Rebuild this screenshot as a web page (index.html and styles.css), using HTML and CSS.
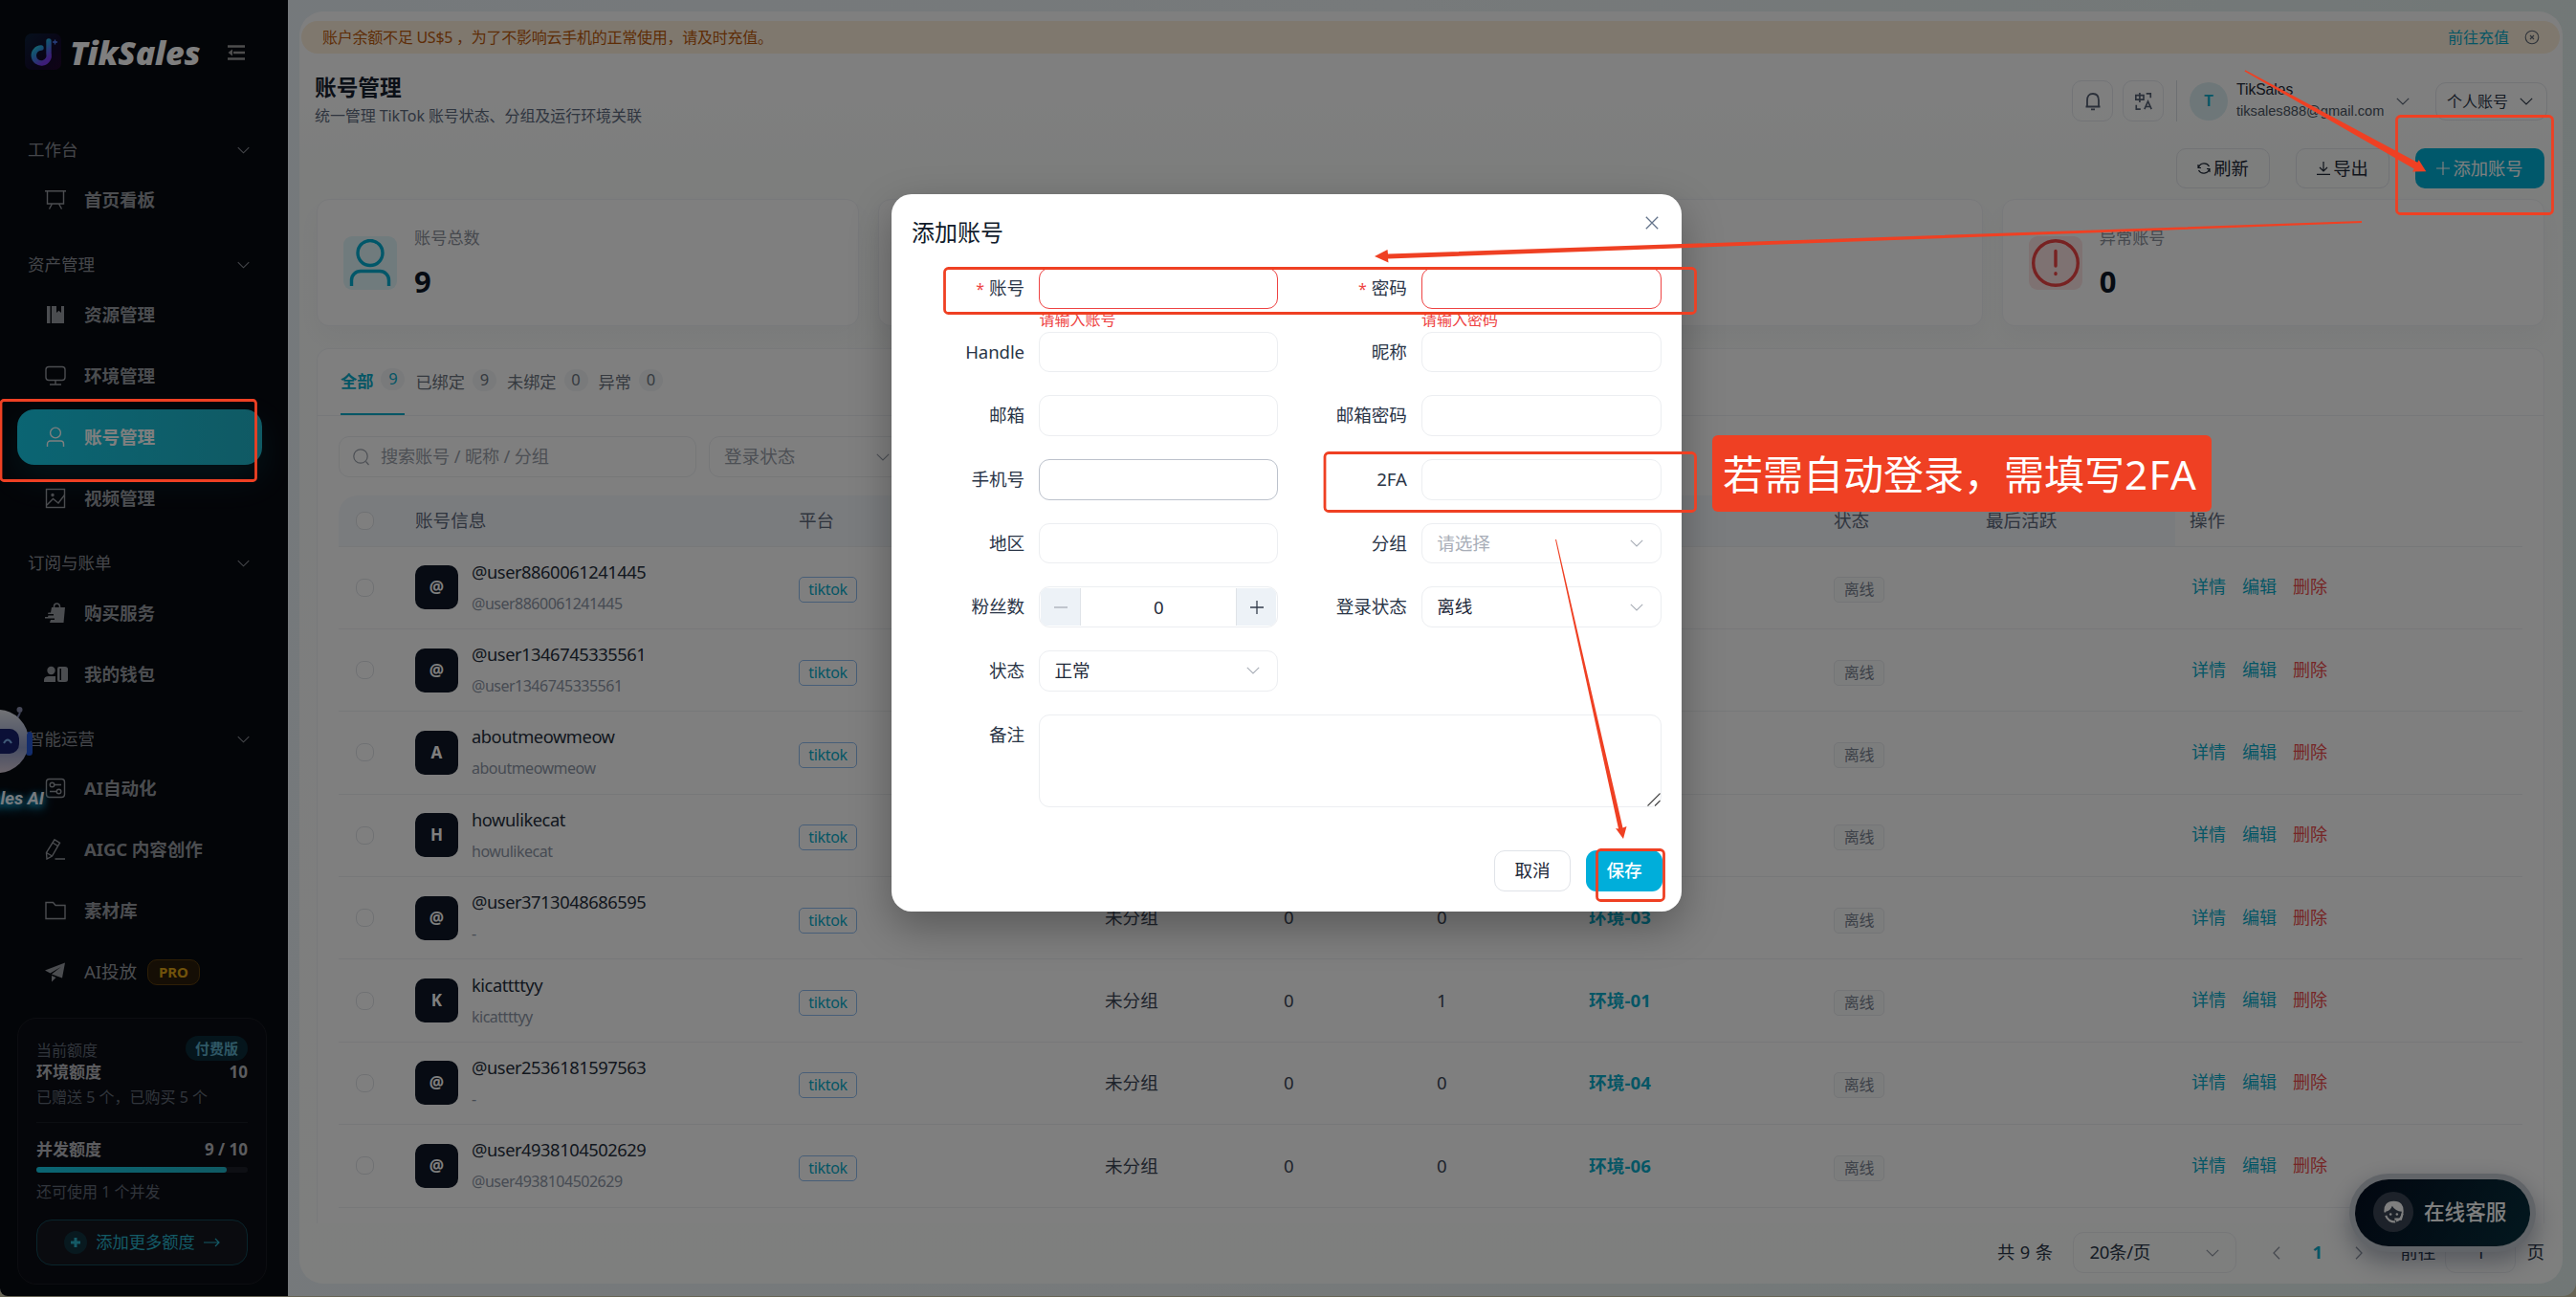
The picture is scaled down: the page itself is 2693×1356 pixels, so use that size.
FILE: index.html
```html
<!DOCTYPE html>
<html lang="zh-CN">
<head>
<meta charset="utf-8">
<title>账号管理</title>
<link rel="stylesheet" href="styles.css">
</head>
<body>
<svg class="defs" width="0" height="0">
  <defs>
    <linearGradient id="note" x1="0" y1="0" x2="0.6" y2="1"><stop offset="0" stop-color="#2ff0e0"/><stop offset=".45" stop-color="#2a9ce0"/><stop offset="1" stop-color="#7a3af0"/></linearGradient>
    <linearGradient id="tile" x1="0" y1="0" x2="1" y2="1"><stop offset="0" stop-color="#0c2038"/><stop offset=".6" stop-color="#120a2c"/><stop offset="1" stop-color="#22062e"/></linearGradient>
    <linearGradient id="head" x1="0" y1="0" x2="0" y2="1"><stop offset="0" stop-color="#e4e6ec"/><stop offset=".6" stop-color="#8f9cc8"/><stop offset="1" stop-color="#d6c9d6"/></linearGradient>
  </defs>
  <symbol id="down" viewBox="0 0 14 8"><path d="M.8.8 7 7 13.2.8"/></symbol>
</svg>

<div class="app">
  <aside class="side">
    <div class="brand">
      <svg class="logo" viewBox="0 0 38 38"><rect width="38" height="38" rx="7" fill="url(#tile)"/><path d="M25 8v13a8 8 0 1 1-8-6" fill="none" stroke="url(#note)" stroke-width="5.400" stroke-linecap="round"/><path d="M31.500 6.500v5M29 9h5" stroke="#5080ff" stroke-width="1.300"/></svg>
      <span class="word">TikSales</span>
      <svg class="fold" viewBox="0 0 18 16"><path d="M0 1.500h18M6 8h12M0 14.500h18" stroke="#9a9a9a" stroke-width="2.600"/><path d="M5 4.500v7L.5 8z" fill="#9a9a9a"/></svg>
    </div>

    <div class="group"><span>工作台</span><svg class="chev"><use href="#down"/></svg></div>
    <div class="item"><svg class="ico" viewBox="0 0 22 22"><path d="M0 1.700h22M2.500 2v13h17V2M7.500 15l-3 5.500M14.500 15l3 5.500"/></svg>首页看板</div>

    <div class="group"><span>资产管理</span><svg class="chev"><use href="#down"/></svg></div>
    <div class="item"><svg class="ico solid" viewBox="0 0 22 22"><path d="M2 2h3.500v18H2zM7 2h5v7l2.500-2.200L17 9V2h3v18H7z"/></svg>资源管理</div>
    <div class="item"><svg class="ico" viewBox="0 0 22 22"><rect x="1" y="1.500" width="20" height="14" rx="3"/><path d="M11 15.500V20M5 20h12"/></svg>环境管理</div>
    <div class="item active"><svg class="ico" viewBox="0 0 22 22"><circle cx="11" cy="6.500" r="5.400"/><path d="M2.500 21v-3a3 3 0 0 1 3-3h11a3 3 0 0 1 3 3v3"/></svg>账号管理</div>
    <div class="item"><svg class="ico" viewBox="0 0 22 22"><rect x="1.500" y="1.500" width="19" height="19"/><circle cx="8" cy="7.500" r="1"/><path d="M2 18l6.500-6.500 5.500 4.500 6.500-8.500"/></svg>视频管理</div>

    <div class="group"><span>订阅与账单</span><svg class="chev"><use href="#down"/></svg></div>
    <div class="item"><svg class="ico solid" viewBox="0 0 22 22"><path d="M7 5h14l-1.500 16H5l1-3h4v-1.500H0V15h3l.5-1.500H9V12H3l.5-1.500H6z"/><path d="M9.500 6V4a3 3 0 0 1 6 0v2" fill="none" stroke="#969aa0" stroke-width="1.500"/></svg>购买服务</div>
    <div class="item"><svg class="ico solid wide" viewBox="0 0 25 18"><circle cx="7.500" cy="5" r="4.200"/><path d="M0 17v-2q0-4 5-4h7v6zM14 3q0-2 2-2h6q3 0 3 2.500v11q0 2.500-3 2.500h-6q-2 0-2-2zM16.500 3v12h1.500V3z" fill-rule="evenodd"/></svg>我的钱包</div>

    <div class="group last"><span>智能运营</span><svg class="chev"><use href="#down"/></svg></div>
    <div class="item"><svg class="ico" viewBox="0 0 22 22"><rect x="1.500" y="1.500" width="19" height="19" rx="3"/><circle cx="7.500" cy="7.500" r="2.300"/><path d="M10 7.500h7M5 14.500h7"/><circle cx="14.500" cy="14.500" r="2.300"/></svg>AI自动化</div>
    <div class="item"><svg class="ico" viewBox="0 0 22 22"><path d="M2 21l-.5-6.500L10 .8l5.500 3.400L7.500 18zM8 4l5.500 3.500M1.500 14.500 7.500 18M10.500 21H21"/></svg>AIGC 内容创作</div>
    <div class="item"><svg class="ico" viewBox="0 0 22 22"><path d="M1 2.500h7.500l2.500 3h10v14H1z"/></svg>素材库</div>
    <div class="item light"><svg class="ico solid" viewBox="0 0 22 22"><path d="M21 1.500 0 9.500l5.500 3L16.500 6 7 13.500l11 4zM7 15l4.500 2L7 21.500z"/></svg>AI投放<span class="pro">PRO</span></div>

    <div class="quota">
      <div class="line dim top"><span>当前额度</span><span class="paid">付费版</span></div>
      <div class="line strong"><span>环境额度</span><span>10</span></div>
      <div class="line dim given">已赠送 5 个，已购买 5 个</div>
      <div class="line strong second"><span>并发额度</span><span>9 / 10</span></div>
      <div class="bar"><i style="width:90%"></i></div>
      <div class="line dim left">还可使用 1 个并发</div>
      <div class="more"><span class="plus"><svg viewBox="0 0 10 10"><path d="M5 0v10M0 5h10" stroke="#28b4cc" stroke-width="3"/></svg></span><span>添加更多额度</span><svg class="arr" viewBox="0 0 17 10"><path d="M0 5h16M12 1l4 4-4 4" fill="none" stroke="#28b4cc" stroke-width="1.200"/></svg></div>
    </div>

    <div class="bot">
      <svg width="48" height="90" viewBox="0 0 48 90"><path d="M17 16l4-8" stroke="#7d84b0" stroke-width="2"/><circle cx="20.500" cy="5" r="3" fill="#8a8fae"/><rect x="27" y="28" width="7" height="25" rx="3.500" fill="#2458d8"/><ellipse cx="-2" cy="38" rx="32" ry="33" fill="url(#head)"/><rect x="28" y="29" width="5" height="23" rx="2.500" fill="#2458d8"/><rect x="-24" y="25" width="44" height="26" rx="10" fill="#16206e"/><path d="M4 40q4-7 8 0" fill="none" stroke="#7fb4f0" stroke-width="2"/></svg>
      <span>TikSales AI</span>
    </div>
  </aside>

  <main class="panel">
    <div class="alert"><span>账户余额不足 US$5 ，为了不影响云手机的正常使用，请及时充值。</span><a>前往充值</a><svg viewBox="0 0 16 16"><circle cx="8" cy="8" r="6.800"/><path d="M6 6l4 4M10 6l-4 4"/></svg></div>

    <header class="head">
      <div class="titles"><h1>账号管理</h1><p>统一管理 TikTok 账号状态、分组及运行环境关联</p></div>
      <div class="tools">
        <div class="sq"><svg viewBox="0 0 18 20"><path d="M1.500 15.500h15M3 15.500V9q0-7 6-7t6 7v6.500M7 18.300h4"/></svg></div>
        <div class="sq"><svg viewBox="0 0 22 22"><path d="M2 4h9v5H2zM6.500 1v11M14 2h5v5M2.500 15v5h5M12 20l4-9 4 9M13.500 17h5"/></svg></div>
        <div class="me"><b>T</b><div><span>TikSales</span><span class="mail">tiksales888@gmail.com</span></div><svg class="chev"><use href="#down"/></svg></div>
        <div class="acct">个人账号<svg class="chev"><use href="#down"/></svg></div>
      </div>
    </header>

    <div class="actions">
      <div class="btn"><svg viewBox="0 0 14 14"><path d="M1 3v3.500h3M13 11V7.500h-3M1.500 6A6 6 0 0 1 12.500 5M12.500 8A6 6 0 0 1 1.500 9"/></svg>刷新</div>
      <div class="btn"><svg viewBox="0 0 14 14"><path d="M7 0v10M3 6l4 4 4-4M0 13.300h14"/></svg>导出</div>
      <div class="btn primary"><svg viewBox="0 0 14 14"><path d="M7 0v14M0 7h14"/></svg>添加账号</div>
    </div>

    <section class="stats">
      <div class="stat"><div class="box"><svg width="44" height="50" viewBox="0 0 44 50"><ellipse cx="22" cy="14.500" rx="13" ry="13"/><path d="M2.500 49v-6a9.500 9.500 0 0 1 9.500-9.500h20a9.500 9.500 0 0 1 9.500 9.500v6"/></svg></div><div><span>账号总数</span><b>9</b></div></div>
      <div class="stat"></div>
      <div class="stat"></div>
      <div class="stat"><div class="box bad"><svg width="50" height="50" viewBox="0 0 50 50"><circle cx="25" cy="25" r="23.300"/><path d="M25 12.500v15.500M25 35.800v.8"/></svg></div><div><span>异常账号</span><b>0</b></div></div>
    </section>

    <section class="card">
      <nav class="tabs">
        <div class="tab on">全部<i>9</i></div><div class="tab">已绑定<i>9</i></div><div class="tab">未绑定<i>0</i></div><div class="tab">异常<i>0</i></div>
      </nav>
      <div class="filters">
        <div class="field search"><svg viewBox="0 0 18 18"><circle cx="8" cy="8" r="7.200"/><path d="M13.500 13.500 16.500 17"/></svg>搜索账号 / 昵称 / 分组</div>
        <div class="field pick">登录状态<svg class="chev"><use href="#down"/></svg></div>
      </div>
      <div class="row th"><div class="ck"><i></i></div><div>账号信息</div><div>平台</div><div></div><div></div><div></div><div></div><div>状态</div><div>最后活跃</div><div class="op">操作</div></div>
      <div class="row"><div class="ck"><i></i></div><div class="acc"><b>@</b><div><span>@user8860061241445</span><small>@user8860061241445</small></div></div><div><em>tiktok</em></div><div></div><div></div><div></div><div></div><div><u>离线</u></div><div></div><div class="ops"><a>详情</a><a>编辑</a><a class="del">删除</a></div></div>
      <div class="row"><div class="ck"><i></i></div><div class="acc"><b>@</b><div><span>@user1346745335561</span><small>@user1346745335561</small></div></div><div><em>tiktok</em></div><div></div><div></div><div></div><div></div><div><u>离线</u></div><div></div><div class="ops"><a>详情</a><a>编辑</a><a class="del">删除</a></div></div>
      <div class="row"><div class="ck"><i></i></div><div class="acc"><b>A</b><div><span>aboutmeowmeow</span><small>aboutmeowmeow</small></div></div><div><em>tiktok</em></div><div></div><div></div><div></div><div></div><div><u>离线</u></div><div></div><div class="ops"><a>详情</a><a>编辑</a><a class="del">删除</a></div></div>
      <div class="row"><div class="ck"><i></i></div><div class="acc"><b>H</b><div><span>howulikecat</span><small>howulikecat</small></div></div><div><em>tiktok</em></div><div></div><div></div><div></div><div></div><div><u>离线</u></div><div></div><div class="ops"><a>详情</a><a>编辑</a><a class="del">删除</a></div></div>
      <div class="row"><div class="ck"><i></i></div><div class="acc"><b>@</b><div><span>@user3713048686595</span><small>-</small></div></div><div><em>tiktok</em></div><div>未分组</div><div>0</div><div>0</div><div class="env">环境-03</div><div><u>离线</u></div><div></div><div class="ops"><a>详情</a><a>编辑</a><a class="del">删除</a></div></div>
      <div class="row"><div class="ck"><i></i></div><div class="acc"><b>K</b><div><span>kicattttyy</span><small>kicattttyy</small></div></div><div><em>tiktok</em></div><div>未分组</div><div>0</div><div>1</div><div class="env">环境-01</div><div><u>离线</u></div><div></div><div class="ops"><a>详情</a><a>编辑</a><a class="del">删除</a></div></div>
      <div class="row"><div class="ck"><i></i></div><div class="acc"><b>@</b><div><span>@user2536181597563</span><small>-</small></div></div><div><em>tiktok</em></div><div>未分组</div><div>0</div><div>0</div><div class="env">环境-04</div><div><u>离线</u></div><div></div><div class="ops"><a>详情</a><a>编辑</a><a class="del">删除</a></div></div>
      <div class="row"><div class="ck"><i></i></div><div class="acc"><b>@</b><div><span>@user4938104502629</span><small>@user4938104502629</small></div></div><div><em>tiktok</em></div><div>未分组</div><div>0</div><div>0</div><div class="env">环境-06</div><div><u>离线</u></div><div></div><div class="ops"><a>详情</a><a>编辑</a><a class="del">删除</a></div></div>
    </section>

    <footer class="pager">
      <span class="total">共 9 条</span>
      <div class="field size">20条/页<svg class="chev"><use href="#down"/></svg></div>
      <svg class="nav" viewBox="0 0 8 14"><path d="M7 .8 1 7l6 6.200"/></svg><b>1</b><svg class="nav" viewBox="0 0 8 14"><path d="M1 .8 7 7l-6 6.200"/></svg>
      <span class="go">前往</span><div class="field num">1</div><span>页</span>
    </footer>
  </main>

  <div class="service"><span><svg viewBox="0 0 28 30"><path d="M3 15Q2 2 14 2t11 13q-1 9-8 11" fill="none" stroke="#fff" stroke-width="2.200"/><path d="M4 14Q2 3 14 2q12 1 10 12-8 0-12-7-2 6-8 7z" fill="#fff"/><circle cx="10" cy="17.500" r="1.500" fill="#fff"/><circle cx="18" cy="17.500" r="1.500" fill="#fff"/><path d="M4 19q3 8 12 8M15 23.500h8l2-7" fill="none" stroke="#fff" stroke-width="2.500"/></svg></span>在线客服</div>
</div>

<div class="mask">
  <div class="dialog">
    <div class="dhead"><h2>添加账号</h2><svg viewBox="0 0 14 14"><path d="M.8.8l12.400 12.400M13.200.8.8 13.200"/></svg></div>
    <div class="form">
      <label class="req">账号</label><div class="in err"></div><label class="req">密码</label><div class="in err"></div>
      <label>Handle</label><div class="in"></div><label>昵称</label><div class="in"></div>
      <label>邮箱</label><div class="in"></div><label>邮箱密码</label><div class="in"></div>
      <label>手机号</label><div class="in hov"></div><label>2FA</label><div class="in"></div>
      <label>地区</label><div class="in"></div><label>分组</label><div class="in sel ph">请选择<svg class="chev"><use href="#down"/></svg></div>
      <label>粉丝数</label><div class="in step"><i class="off"><svg viewBox="0 0 14 14"><path d="M0 7h14"/></svg></i><span>0</span><i><svg viewBox="0 0 14 14"><path d="M0 7h14M7 0v14"/></svg></i></div><label>登录状态</label><div class="in sel">离线<svg class="chev"><use href="#down"/></svg></div>
      <label>状态</label><div class="in sel">正常<svg class="chev"><use href="#down"/></svg></div><span></span><span></span>
      <label>备注</label><div class="in area"><svg viewBox="0 0 14 14"><path d="M.5 13.500 13.500.5M8 13.500 13.500 8"/></svg></div>
      <span class="msg m1">请输入账号</span><span class="msg m2">请输入密码</span>
    </div>
    <div class="dfoot"><div class="dbtn">取消</div><div class="dbtn save">保存</div></div>
  </div>
</div>

<svg class="marks" width="2693" height="1356" viewBox="0 0 2693 1356">
  <g fill="none" stroke="#ef4023" stroke-width="2.800">
    <rect x="1" y="418.500" width="266.500" height="84" rx="3"/>
    <rect x="2505.500" y="121.500" width="163" height="102" rx="4"/>
    <rect x="987.500" y="280.500" width="785" height="47" rx="4"/>
    <rect x="1385" y="473.500" width="387.500" height="61" rx="4"/>
    <rect x="1669.500" y="888.500" width="70" height="53" rx="4"/>
  </g>
  <g fill="#ef4023">
    <path d="M2346.500 74.500l.8-1.200L2527.200 169.800l1.500-2.600 7.600 12-14.200.2 1.600-3z"/>
    <path d="M2469 231v2L1451 270.500l.5 4-14.500-6.500 13.500-7 .5 4.500z"/>
    <path d="M1626 564h1l69.500 301.500 4-1.500-3.500 13-8-11 3 .5z"/>
  </g>
</svg>
<div class="callout">若需自动登录，需填写<span>2FA</span></div>
</body>
</html>
```
FILE: styles.css
```css
* { box-sizing: border-box; }
body { margin: 0; width: 2693px; height: 1356px; overflow: hidden; position: relative; background: #cfc9a8; font: 400 18.6px/1 "Noto Sans", "Noto Sans CJK SC", sans-serif; color: #1f2a3a; }
svg { fill: none; flex: none; display: block; }
.defs { position: absolute; }
.chev { width: 14px; height: 8px; stroke: currentColor; stroke-width: 1.1; }
b { font-weight: 700; }
i, em, u { font-style: normal; text-decoration: none; }

.app { position: relative; display: flex; height: 1355px; padding-right: 14px; border-radius: 0 0 14px 8px; background: linear-gradient(100deg, #eaf2f8, #eef4f6 50%, #e2efed); overflow: hidden; }

/* sidebar */
.side { position: relative; width: 301px; padding: 35px 22px 0 18px; background: #070a11; color: #969aa0; display: flex; flex-direction: column; flex: none; }
.brand { display: flex; align-items: center; height: 38px; margin: 0 0 45px 8px; }
.logo { width: 38px; height: 38px; }
.word { width: 137px; margin: 0 28px 0 9px; padding-top: 1px; font: italic 800 34px/38px "Open Sans", "Noto Sans", sans-serif; letter-spacing: -.2px; color: #fff; white-space: nowrap; }
.fold { width: 18px; height: 16px; margin-top: 1px; }
.group { display: flex; align-items: center; justify-content: space-between; height: 46px; margin-top: 16px; padding: 0 18px 0 11px; font-size: 17.500px; color: #8b8f96; }
.group .chev { width: 13px; height: 8px; }
.item { display: flex; align-items: center; height: 58px; margin-bottom: 6px; padding-left: 29px; width: 256px; font-weight: 700; border-radius: 18px; letter-spacing: -.1px; }
.item + .group { margin-top: 10px; }
.group.last { height: 45px; }
.ico { width: 22px; height: 22px; margin-right: 19px; stroke: currentColor; stroke-width: 1.4; }
.ico.solid { fill: currentColor; stroke: none; }
.ico.wide { width: 25px; height: 18px; margin: 0 17.500px 0 -1.500px; }
.item.active { color: #fff; background: linear-gradient(90deg, #16cae6, #20b4c8); box-shadow: 0 14px 34px rgba(20,190,220,.16); }
.light { font-weight: 400; }
.pro { margin-left: 11px; width: 55px; height: 27px; border: 1px solid #5d3e0c; border-radius: 10px; background: #2a1c0a; color: #e0a416; font: 700 15px/25px "Noto Sans", sans-serif; text-align: center; }
.quota { position: relative; width: 261px; height: 279px; margin-top: 13px; padding: 17px 19px; border: 1px solid #191b22; border-radius: 20px; background: #0b0d14; }
.line { display: flex; justify-content: space-between; align-items: center; font-size: 16px; height: 26px; white-space: nowrap; }
.dim { color: #626a78; }
.paid { width: 65px; height: 26px; border-radius: 13px; background: #0a2b38; color: #5fb0cc; font-weight: 700; font-size: 15px; line-height: 26px; text-align: center; }
.top { padding-top: 2px; }
.top span:first-child { padding-top: 3px; }
.strong { font-size: 17px; font-weight: 700; color: #b8b9bf; height: 24px; }
.given { height: 30px; letter-spacing: 0; }
.second { margin-top: 11px; padding: 12px 0 0; height: 44px; border-top: 1px solid #191c24; }
.bar { height: 6px; margin-top: 3px; border-radius: 3px; background: #1d1f28; }
.bar i { display: block; height: 6px; border-radius: 3px; background: linear-gradient(90deg, #16cae6, #20b4c8); }
.left { margin-top: 7px; }
.more { display: flex; align-items: center; justify-content: center; gap: 9px; height: 48px; margin-top: 16px; border: 1px solid #134a58; border-radius: 16px; background: #14161f; color: #28b4cc; font-size: 17.300px; }
.plus { width: 24px; height: 24px; border-radius: 50%; background: #10333f; display: grid; place-items: center; }
.plus svg { width: 10px; height: 10px; }
.arr { width: 17px; height: 10px; }
.bot { position: absolute; left: 0; top: 737px; width: 48px; height: 112px; }
.bot span { position: absolute; right: 2px; top: 88px; font: italic 700 18.500px/20px Roboto, sans-serif; color: #eef6ff; white-space: nowrap; text-shadow: 0 2px 6px #18b4e8, 0 4px 12px #18b4e8; }

/* content panel */
.panel { flex: 1; margin: 12px 0 13px 12px; border-radius: 25px; background: linear-gradient(180deg, #fff, #fff 6%, #fafcfb 12%, #fdfefd); padding: 10px 3px 0 2px; min-width: 0; }
.alert { display: flex; align-items: center; height: 34px; padding: 0 21px 0 22px; border-radius: 17px; background: #fff0dc; color: #bd5a0c; font-size: 16px; }
.alert a { margin-left: auto; color: #0aaccb; }
.alert svg { width: 16px; height: 16px; margin-left: 16px; stroke: #5c6675; stroke-width: 1.1; }
.alert span { letter-spacing: -.25px; }
.head { display: flex; justify-content: space-between; height: 99px; padding: 0 13px 0 14px; }
.titles h1 { margin: 24px 0 0; font-size: 22.700px; line-height: 24px; color: #16202f; }
.titles p { margin: 7px 0 0; font-size: 16px; letter-spacing: -.08px; line-height: 20px; color: #5f6b7e; }
.tools { display: flex; align-items: center; height: 43px; margin-top: 28px; color: #5b6678; }
.sq { width: 43px; height: 43px; border: 1px solid #e6e9ee; border-radius: 10px; display: grid; place-items: center; margin-right: 10px; }
.sq svg { width: 20px; height: 20px; stroke: #566174; stroke-width: 1.8; }
.me { display: flex; align-items: center; height: 43px; margin-left: 3px; padding-left: 13px; border-left: 1px solid #dadfe5; font: 15.600px/22px "Liberation Sans", sans-serif; }
.me b { width: 40px; height: 40px; border-radius: 50%; background: #dceff3; color: #0aaccb; line-height: 40px; text-align: center; margin-right: 9px; }
.me div { width: 167px; padding-bottom: 1px; }
.me span { display: block; color: #1f2937; }
.me .mail { color: #4b5563; font-size: 14.600px; }
.acct { display: flex; align-items: center; justify-content: space-between; width: 117px; height: 40px; margin-left: 27px; padding: 0 14px 0 11px; border: 1px solid #e4e7ec; border-radius: 11px; font-size: 16px; color: #2b3648; }
.actions { display: flex; justify-content: flex-end; gap: 27px; padding-right: 16px; height: 53px; }
.btn { display: flex; align-items: center; justify-content: center; gap: 3px; width: 98px; height: 42px; border: 1px solid #e2e5ea; border-radius: 10px; font-size: 18.300px; color: #1f2937; }
.btn svg { width: 14px; height: 14px; stroke: currentColor; stroke-width: 1.2; }
.primary { width: 135px; border: 0; background: #00b0d6; color: #fff; }
.stats { display: grid; grid-template-columns: repeat(4, 1fr); gap: 20px; margin: 0 16px 23px; }
.stat { display: flex; align-items: center; gap: 18px; height: 133px; padding: 0 27px; border: 1px solid #f1f3f6; border-radius: 13px; background: #fff; box-shadow: 0 12px 24px rgba(30,40,60,.03); }
.box { width: 56px; height: 56px; border-radius: 9px; background: #e0f6fa; display: grid; place-items: center; }
.box svg { stroke: #00aed2; stroke-width: 3.4; }
.bad { background: #fde4e4; }
.bad svg { stroke: #ef4444; stroke-width: 3.4; stroke-linecap: round; }
.stat span { display: block; font-size: 17.200px; line-height: 20px; color: #8d929c; margin-top: 1px; }
.stat b { display: block; font-size: 31px; line-height: 36px; margin-top: 17px; color: #0d1626; }
.card { height: 915px; margin: 0 16px; border: 1px solid #f1f3f6; border-bottom: 0; border-radius: 13px 13px 0 0; background: #fff; padding: 0 22px; overflow: hidden; }
.tabs { display: flex; gap: 11px; height: 70px; margin: 0 -22px; padding-left: 24px; border-bottom: 1px solid #eff1f4; }
.tab { display: flex; align-items: center; gap: 8px; height: 69px; font-size: 17.200px; color: #6c7480; }
.tab i { width: 25px; height: 23px; border-radius: 12px; background: #f2f4f7; font-size: 16.500px; line-height: 22px; text-align: center; margin-top: -5px; }
.on { color: #0aaccb; font-weight: 700; border-bottom: 2px solid #0aaccb; }
.on i { font-weight: 400; }
.filters { display: flex; gap: 13px; margin: 21px 0 19px; }
.field { display: flex; align-items: center; height: 43px; border: 1px solid #eceef1; border-radius: 11px; color: #9aa0aa; }
.field .chev { margin-left: auto; }
.search { width: 374px; padding-left: 14px; gap: 11px; font-size: 18.200px; letter-spacing: -.15px; }
.search svg { width: 18px; height: 18px; stroke: currentColor; stroke-width: 1.2; }
.pick { width: 200px; padding: 0 10px 0 15px; }
.row { display: grid; grid-template-columns: 80px 401px 320px 187px 160px 159px 256px 159px 213px 1fr; align-items: center; height: 86.375px; border-bottom: 1px solid #eef0f3; color: #3c4656; white-space: nowrap; }
.th { height: 53.500px; background: #f5f8fd; border-radius: 20px 0 0 0; color: #5f6a7c; }
.op { margin-left: -15px; padding-left: 15px; background: #fff; height: 52.500px; line-height: 52px; }
.ck i { display: block; width: 19px; height: 19px; margin-left: 18px; border: 1px solid #dfe2e7; border-radius: 8px; background: #fff; }
.acc { display: flex; align-items: center; gap: 14px; }
.acc b { width: 45px; height: 46px; border-radius: 10px; background: #0e1726; color: #fff; font-size: 17px; line-height: 46px; text-align: center; }
.acc span, .acc small { display: block; line-height: 24px; }
.acc span { color: #262f3d; font-size: 18.300px; letter-spacing: -.45px; }
.acc small { margin-top: 9px; font-size: 16px; letter-spacing: -.5px; color: #8e97a7; }
.row em, .row u { display: block; height: 27px; border-radius: 5px; font-size: 16px; line-height: 24px; text-align: center; margin-top: 5px; border: 1px solid #8fbcf0; color: #0aaccb; width: 61px; letter-spacing: -.3px; }
.row u { width: 53px; border-color: #e9ebee; color: #7b8492; background: #f9fafb; }
.env { color: #0aaccb; font-weight: 700; letter-spacing: .15px; }
.ops { display: flex; gap: 17px; padding-left: 2px; color: #0aaccb; font-size: 18px; margin-top: -2px; }
.del { color: #ec4c4c; }
.pager { display: flex; align-items: center; justify-content: flex-end; height: 43px; margin-top: 9px; padding-right: 16px; color: #2b3648; }
.total { font-size: 18.300px; letter-spacing: .4px; }
.size { width: 171px; margin: 0 38px 0 20px; padding: 0 17px; color: #2b3648; letter-spacing: -.4px; }
.pager .chev { color: #8d94a0; }
.nav { width: 8px; height: 14px; stroke: #8d94a0; stroke-width: 1.3; }
.pager b { margin: 0 34px; color: #0aaccb; }
.go { margin: 0 10px 0 39px; }
.num { width: 74px; justify-content: center; color: #2b3648; margin-right: 11px; }
.service { position: absolute; left: 2462px; top: 1233px; width: 183px; height: 70px; border-radius: 35px; background: linear-gradient(120deg, #050e20, #06303e); box-shadow: 0 0 0 6px #c3c9d0, 0 10px 26px 6px rgba(15,25,60,.35); display: flex; align-items: center; padding: 0 0 2px 19px; gap: 11px; color: #fff; font-size: 21.600px; font-weight: 500; }
.service span { width: 42px; height: 42px; border-radius: 50%; background: #3a4554; display: grid; place-items: center; }
.service svg { width: 25px; height: 25px; }

/* dialog */
.mask { position: absolute; inset: 0; padding: 203px 0 0 932px; background: rgba(0,0,0,.5); }
.dialog { width: 826px; height: 750px; border-radius: 21px; background: #fff; padding: 23px 20px 0; box-shadow: 0 16px 44px rgba(0,0,0,.3); }
.dhead { display: flex; justify-content: space-between; height: 54px; }
.dhead h2 { margin: 0; padding-left: 1px; font-size: 24px; font-weight: 400; line-height: 34px; color: #111b2b; }
.dhead svg { width: 14px; height: 14px; margin-right: 4px; stroke: #64748b; stroke-width: 1.3; }
.form { position: relative; display: grid; grid-template-columns: 119px 250px 119px 251px; column-gap: 15.400px; row-gap: 24px; grid-auto-rows: 42.700px; }
label { text-align: right; line-height: 42px; color: #2a3547; letter-spacing: -.1px; }
.req::before { content: "*"; color: #ee4343; margin-right: 5px; font-size: 16px; }
.in { border: 1px solid #eceef1; border-radius: 11px; }
.err { border-color: #ee4343; }
.hov { border-color: #bcc2cc; }
.sel { display: flex; align-items: center; justify-content: space-between; padding: 0 18px 0 15px; color: #1f2a3a; }
.sel .chev { color: #a8adb6; }
.ph { color: #a9aeb8; }
.step { display: flex; align-items: stretch; overflow: hidden; padding: 1px; }
.step span { flex: 1; text-align: center; line-height: 39px; }
.step i { width: 42px; background: #edf2f7; display: grid; place-items: center; border-left: 1px solid #dfe3e8; }
.step i.off { border: 0; border-right: 1px solid #dfe3e8; }
.step svg { width: 14px; height: 14px; stroke: #333d4c; stroke-width: 1.3; }
.step .off svg { stroke: #b0b6bf; }
.area { grid-column: 2 / 5; height: 97px; display: flex; align-items: flex-end; justify-content: flex-end; }
.area svg { width: 14px; height: 14px; stroke: #444; stroke-width: 1.1; }
.msg { position: absolute; top: 45px; font-size: 16px; line-height: 18px; color: #ee4343; }
.m1 { left: 134.500px; }
.m2 { left: 534px; }
.dfoot { display: flex; justify-content: flex-end; gap: 16px; margin-top: 99px; }
.dbtn { width: 80px; height: 43px; border: 1px solid #e0e3e8; border-radius: 11px; text-align: center; line-height: 40px; }
.save { border: 0; line-height: 41px; background: #00aeda; color: #fff; font-weight: 500; }

/* annotations */
.marks { position: absolute; left: 0; top: 0; }
.callout { position: absolute; left: 1790px; top: 455px; width: 522px; height: 80px; padding-left: 11px; border-radius: 6px; background: #ef4023; color: #fff; font-size: 42px; line-height: 82px; white-space: nowrap; }
.callout span { letter-spacing: 1.500px; }
```
